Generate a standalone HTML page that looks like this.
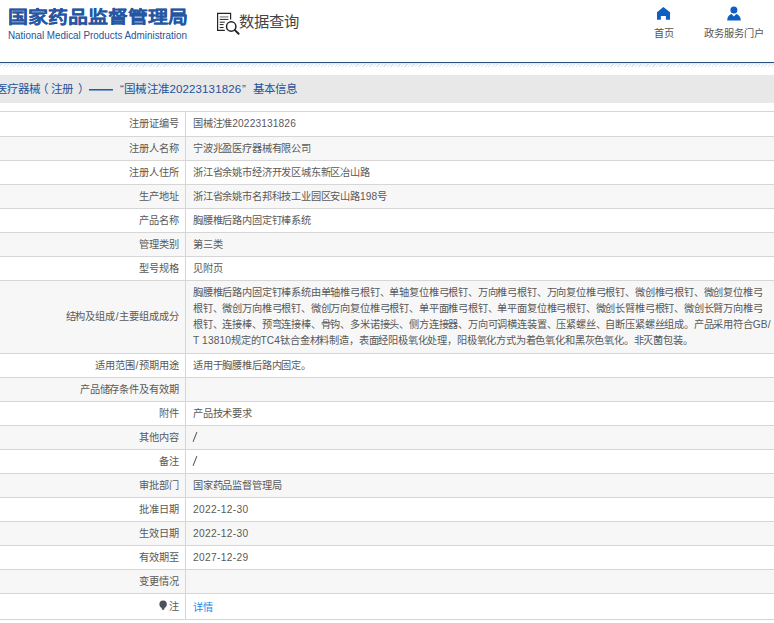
<!DOCTYPE html>
<html lang="zh-CN">
<head>
<meta charset="utf-8">
<style>
*{margin:0;padding:0;box-sizing:border-box}
html,body{width:774px;height:623px;overflow:hidden;background:#fff}
body{font-family:"Liberation Sans",sans-serif;color:#333;position:relative}
.abs{position:absolute;white-space:nowrap}
#title{left:8px;top:4px;font-size:20px;font-weight:bold;color:#2556a3;line-height:24px;transform:scaleY(0.87);transform-origin:0 20px;-webkit-text-stroke:0.12px #2556a3}
#eng{left:8px;top:30px;font-size:9.85px;color:#2a5399;line-height:12px;transform:scaleY(1.12);transform-origin:0 8.5px}
#sq{left:239px;top:11.5px;font-size:15.3px;color:#444;line-height:20px}
#nav1{left:654px;top:28px;font-size:10.2px;color:#555;line-height:12px}
#nav2{left:704px;top:28px;font-size:10.2px;color:#555;line-height:12px}
#line1{left:0;top:62px;width:774px;height:1px;background:#28527e}
#line2{left:0;top:63px;width:774px;height:1px;background:#d6f0fb}
#hatch{left:0;top:64px;width:774px;height:3px;background:linear-gradient(rgba(190,225,250,0.5),rgba(255,255,255,0) 1px),repeating-linear-gradient(135deg,#fff 0 1.2px,#e2e2e2 1.2px 2px,#fff 2px 2.47px)}
#crumb{left:0;top:75px;width:774px;height:28px;background:#e8e8e8}
.crumbt{top:80.6px;font-size:11.5px;color:#1f5299;line-height:16px}
#tbl{position:absolute;left:0;top:0;width:774px;height:623px}
.r{position:absolute;left:0;width:774px;border-top:1px solid #d6d6d6}
.r.g{background:#f7f7f7}
.l{position:absolute;right:595.5px;font-size:10.2px;letter-spacing:-0.14px;line-height:16px;color:#595959;text-align:right;white-space:nowrap}
.v{position:absolute;left:193px;font-size:10.2px;line-height:16px;color:#595959;white-space:nowrap;letter-spacing:-0.18px}
.n{letter-spacing:0.12px}.sl{margin:0 0.9px}.d{letter-spacing:0.35px}.lnk{color:#2c86e8;position:relative;top:1px}.pin{display:inline-block;width:6px;height:8px}
.bb{position:absolute;left:0;top:619px;width:774px;height:1px;background:#d6d6d6}
.vl{position:absolute;left:185px;top:111px;height:508px;width:1px;background:#d6d6d6}
</style>
</head>
<body>
<svg class="abs" style="left:0;top:0" width="774" height="60" viewBox="0 0 774 60">
<g fill="none" stroke="#23232b" stroke-linecap="butt">
<path d="M230.6 19.6V13.4H217.6V30.3H224.8" stroke-width="1.2"/>
<path d="M219.7 16.9H228.4" stroke="#8a8a8a" stroke-width="1.3"/>
<path d="M219.7 19.4H228.4M219.7 22.2H224.8M219.7 24.6H223.6M219.7 27.5H223.6" stroke-width="1"/>
<circle cx="231.2" cy="26.5" r="4.7" stroke-width="1.5"/>
<path d="M234.9 30.1L238.6 33.8" stroke-width="2" stroke-linecap="round"/>
</g>
<path fill="#0f5fc2" d="M663.4 7.1L670 12.3V19.7H665.9V15.9H660.85V19.7H657V12.3Z"/>
<circle fill="#0f5fc2" cx="733.9" cy="9.95" r="3.5"/>
<path fill="#0f5fc2" d="M727.2 20.45C727.2 17.2 729 14.9 731.6 14.1L733.9 16.4L736.2 14.1C738.8 14.9 740.8 17.2 740.8 20.45Z"/>
</svg>
<div class="abs" id="title">国家药品监督管理局</div>
<div class="abs" id="eng">National Medical Products Administration</div>
<div class="abs" id="sq">数据查询</div>
<div class="abs" id="nav1">首页</div>
<div class="abs" id="nav2">政务服务门户</div>
<div class="abs" id="line1"></div>
<div class="abs" id="line2"></div>
<div class="abs" id="hatch"></div>
<div class="abs" id="crumb"></div>
<div class="abs crumbt" style="left:-4px">医疗器械</div><div class="abs crumbt" style="left:37px">（</div><div class="abs crumbt" style="left:51px">注册</div><div class="abs crumbt" style="left:78px">）</div><div class="abs" style="left:89px;top:89px;width:23.5px;height:2px;background:linear-gradient(#2a5a9c,#2a5a9c 50%,#7d9cc6 50%)"></div><div class="abs crumbt" style="left:120px">“</div><div class="abs crumbt" style="left:124px;letter-spacing:0.25px">国械注准</div><div class="abs crumbt" style="left:169.4px;letter-spacing:0.14px">20223131826</div><div class="abs crumbt" style="left:242px">”</div><div class="abs crumbt" style="left:253px">基本信息</div>
<div id="tbl">
<div class="r" style="top:111px;height:25px"><div class="l" style="top:4px">注册证编号</div><div class="v" style="top:4px">国械注准<span class="n">20223131826</span></div></div>
<div class="r g" style="top:136px;height:24px"><div class="l" style="top:4px">注册人名称</div><div class="v" style="top:4px">宁波兆盈医疗器械有限公司</div></div>
<div class="r" style="top:160px;height:24px"><div class="l" style="top:4px">注册人住所</div><div class="v" style="top:4px">浙江省余姚市经济开发区城东新区冶山路</div></div>
<div class="r g" style="top:184px;height:24px"><div class="l" style="top:4px">生产地址</div><div class="v" style="top:4px">浙江省余姚市名邦科技工业园区安山路<span class="n">198</span>号</div></div>
<div class="r" style="top:208px;height:24px"><div class="l" style="top:4px">产品名称</div><div class="v" style="top:4px">胸腰椎后路内固定钉棒系统</div></div>
<div class="r g" style="top:232px;height:24px"><div class="l" style="top:4px">管理类别</div><div class="v" style="top:4px">第三类</div></div>
<div class="r" style="top:256px;height:24px"><div class="l" style="top:4px">型号规格</div><div class="v" style="top:4px">见附页</div></div>
<div class="r g" style="top:280px;height:73px"><div class="l" style="top:28px">结构及组成<span class="sl">/</span>主要组成成分</div><div class="v" style="top:4px">胸腰椎后路内固定钉棒系统由单轴椎弓根钉、单轴复位椎弓根钉、万向椎弓根钉、万向复位椎弓根钉、微创椎弓根钉、微创复位椎弓<br>根钉、微创万向椎弓根钉、微创万向复位椎弓根钉、单平面椎弓根钉、单平面复位椎弓根钉、微创长臂椎弓根钉、微创长臂万向椎弓<br>根钉、连接棒、预弯连接棒、骨钩、多米诺接头、侧方连接器、万向可调横连装置、压紧螺丝、自断压紧螺丝组成。产品采用符合<span class="n">GB/</span><br><span class="n">T 13810</span>规定的<span class="n">TC4</span>钛合金材料制造，表面经阳极氧化处理，阳极氧化方式为着色氧化和黑灰色氧化。非灭菌包装。</div></div>
<div class="r" style="top:353px;height:24px"><div class="l" style="top:4px">适用范围<span class="sl">/</span>预期用途</div><div class="v" style="top:4px">适用于胸腰椎后路内固定。</div></div>
<div class="r g" style="top:377px;height:24px"><div class="l" style="top:4px">产品储存条件及有效期</div><div class="v" style="top:4px"></div></div>
<div class="r" style="top:401px;height:24px"><div class="l" style="top:4px">附件</div><div class="v" style="top:4px">产品技术要求</div></div>
<div class="r g" style="top:425px;height:24px"><div class="l" style="top:4px">其他内容</div><div class="v" style="top:4px"></div><svg class="abs" style="left:190px;top:0" width="10" height="22" viewBox="190 426 10 22"><path d="M193.2 441.4L196.8 432.4" stroke="#555" stroke-width="1.05" stroke-linecap="round"/></svg></div>
<div class="r" style="top:449px;height:24px"><div class="l" style="top:4px">备注</div><div class="v" style="top:4px"></div><svg class="abs" style="left:190px;top:0" width="10" height="22" viewBox="190 450 10 22"><path d="M193.2 465.4L196.8 456.4" stroke="#555" stroke-width="1.05" stroke-linecap="round"/></svg></div>
<div class="r g" style="top:473px;height:24px"><div class="l" style="top:4px">审批部门</div><div class="v" style="top:4px">国家药品监督管理局</div></div>
<div class="r" style="top:497px;height:24px"><div class="l" style="top:4px">批准日期</div><div class="v" style="top:4px"><span class="d">2022-12-30</span></div></div>
<div class="r g" style="top:521px;height:24px"><div class="l" style="top:4px">生效日期</div><div class="v" style="top:4px"><span class="d">2022-12-30</span></div></div>
<div class="r" style="top:545px;height:24px"><div class="l" style="top:4px">有效期至</div><div class="v" style="top:4px"><span class="d">2027-12-29</span></div></div>
<div class="r g" style="top:569px;height:24px"><div class="l" style="top:4px">变更情况</div><div class="v" style="top:4px"></div></div>
<div class="r" style="top:593px;height:26px"><div class="l" style="top:5px">注</div><div class="v" style="top:5px"><span class="lnk">详情</span></div></div>
<svg class="abs" style="left:155px;top:596px" width="16" height="18" viewBox="155 596 16 18"><circle cx="163.1" cy="604.2" r="3.7" fill="#505058"/><path d="M161.4 606.5H164.8L164.2 609.8H162Z" fill="#505058"/></svg>
<div class="vl"></div>
<div class="bb"></div>
</div>
</body>
</html>
